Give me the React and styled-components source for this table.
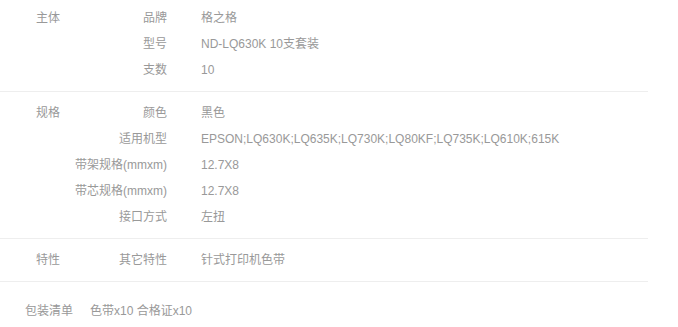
import React from 'react';
import styled, { createGlobalStyle } from 'styled-components';

const GlobalStyle = createGlobalStyle`
  body {
    margin: 0;
    background: #fff;
    font-family: "Liberation Sans", "Noto Sans CJK SC", sans-serif;
    font-size: 12px;
    color: #999;
  }
`;

const Specs = styled.div`
  width: 648px;
`;

const Section = styled.div`
  display: flex;
  padding: ${p => (p.first ? '5px' : '8px')} 0 8px;
  border-bottom: 1px solid #eee;
`;

const GroupTitle = styled.div`
  box-sizing: border-box;
  width: 60px;
  padding-left: 36px;
  line-height: 26px;
  white-space: nowrap;
`;

const Rows = styled.div`
  flex: 1;
`;

const Row = styled.div`
  display: grid;
  grid-template-columns: 107px 1fr;
  column-gap: 34px;
  line-height: 26px;
`;

const Label = styled.span`
  text-align: right;
  white-space: nowrap;
`;

const Value = styled.span`
  white-space: nowrap;
`;

const Packing = styled.div`
  display: flex;
  gap: 17px;
  padding: 16px 0 0 25px;
  line-height: 26px;
`;

const groups = [
  {
    title: '主体',
    rows: [
      ['品牌', '格之格'],
      ['型号', 'ND-LQ630K 10支套装'],
      ['支数', '10'],
    ],
  },
  {
    title: '规格',
    rows: [
      ['颜色', '黑色'],
      ['适用机型', 'EPSON;LQ630K;LQ635K;LQ730K;LQ80KF;LQ735K;LQ610K;615K'],
      ['带架规格(mmxm)', '12.7X8'],
      ['带芯规格(mmxm)', '12.7X8'],
      ['接口方式', '左扭'],
    ],
  },
  {
    title: '特性',
    rows: [['其它特性', '针式打印机色带']],
  },
];

export default function App() {
  return (
    <>
      <GlobalStyle />
      <Specs>
        {groups.map((g, i) => (
          <Section key={g.title} first={i === 0}>
            <GroupTitle>{g.title}</GroupTitle>
            <Rows>
              {g.rows.map(([k, v]) => (
                <Row key={k}>
                  <Label>{k}</Label>
                  <Value>{v}</Value>
                </Row>
              ))}
            </Rows>
          </Section>
        ))}
        <Packing>
          <span>包装清单</span>
          <span>色带x10 合格证x10</span>
        </Packing>
      </Specs>
    </>
  );
}
